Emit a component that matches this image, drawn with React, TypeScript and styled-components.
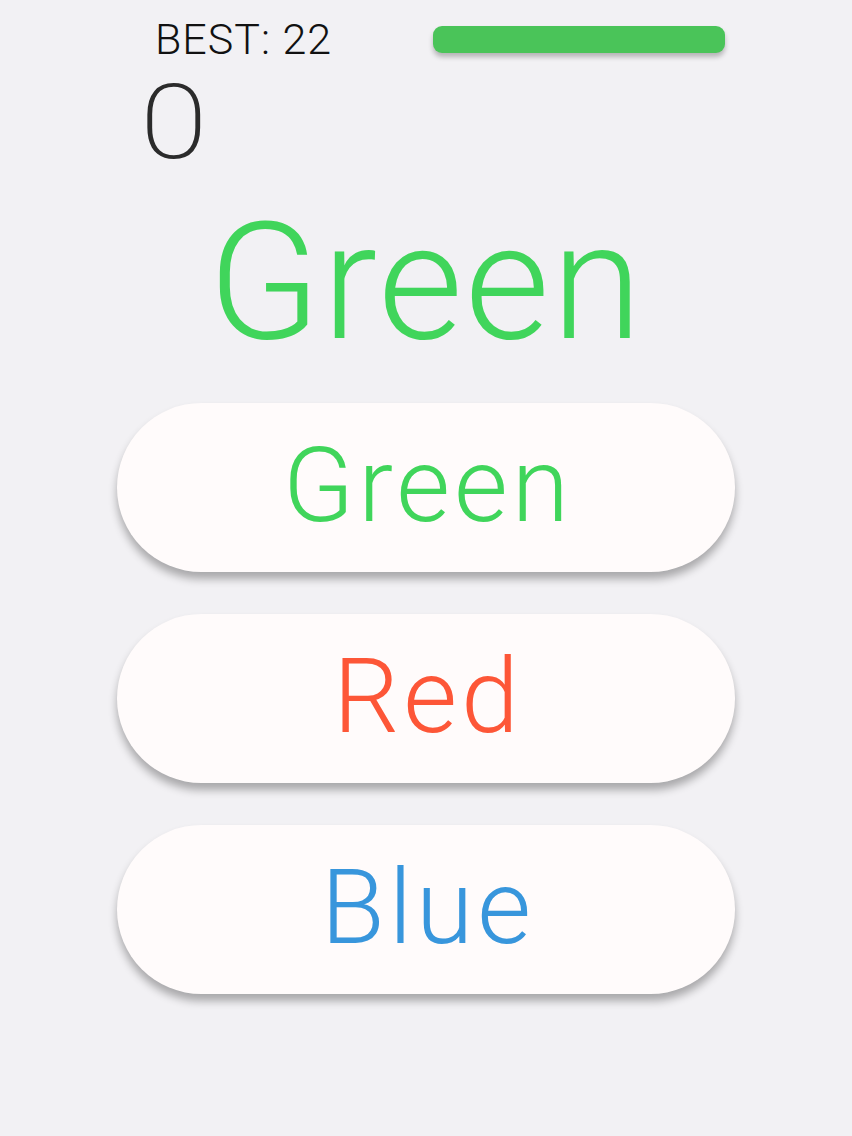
import styled, { createGlobalStyle } from "styled-components";

const GlobalStyle = createGlobalStyle`
  html, body {
    margin: 0;
    padding: 0;
    background: #f2f1f4;
  }
  body {
    font-family: Roboto, "Helvetica Neue", "Liberation Sans", sans-serif;
    font-weight: 300;
  }
`

const Page = styled.div`
  width: 852px;
  height: 1136px;
  display: flex;
  flex-direction: column;
  align-items: center;
  box-sizing: border-box;
`

const Header = styled.div`
  width: 852px;
  display: flex;
  justify-content: space-between;
  align-items: flex-start;
  padding: 0 127px 0 140px;
  box-sizing: border-box;
`

const Scores = styled.div`
  display: flex;
  flex-direction: column;
`

const Best = styled.div`
  font-size: 43px;
  line-height: 1;
  color: #111;
  letter-spacing: 1px;
  margin: 18px 0 0 15px;
`

const Score = styled.div`
  font-size: 104px;
  font-weight: 200;
  line-height: 1;
  color: #2b2b2b;
  margin-top: 10px;
  transform: scaleX(1.18);
  transform-origin: left center;
`

const Timer = styled.div`
  width: 292px;
  height: 27px;
  margin-top: 26px;
  border-radius: 9px;
  background: #4ac459;
  box-shadow: 0 4px 5px rgba(0, 0, 0, 0.25);
`

const Word = styled.div<{ $color: string }>`
  font-size: 164px;
  line-height: 1;
  letter-spacing: 2px;
  color: ${p => p.$color};
  margin-top: 25px;
`

const Choices = styled.div`
  display: flex;
  flex-direction: column;
  align-items: center;
  gap: 42px;
  margin-top: 39px;
`

const Choice = styled.button<{ $color: string }>`
  width: 618px;
  height: 169px;
  border: none;
  border-radius: 85px;
  background: #fffbfb;
  box-shadow: 0 7px 8px rgba(0, 0, 0, 0.3);
  color: ${p => p.$color};
  font-family: inherit;
  font-weight: 300;
  font-size: 104px;
  letter-spacing: 4px;
  display: flex;
  align-items: center;
  justify-content: center;
  padding: 0 0 4px 4px;
  cursor: pointer;
`

const choices = [
  { label: "Green", color: "#40d55b" },
  { label: "Red", color: "#fd5637" },
  { label: "Blue", color: "#3896dc" },
]

export default function App() {
  return (
    <Page>
      <GlobalStyle />
      <Header>
        <Scores>
          <Best>BEST: 22</Best>
          <Score>0</Score>
        </Scores>
        <Timer />
      </Header>
      <Word $color="#40d55b">Green</Word>
      <Choices>
        {choices.map(c => (
          <Choice key={c.label} $color={c.color}>{c.label}</Choice>
        ))}
      </Choices>
    </Page>
  )
}
